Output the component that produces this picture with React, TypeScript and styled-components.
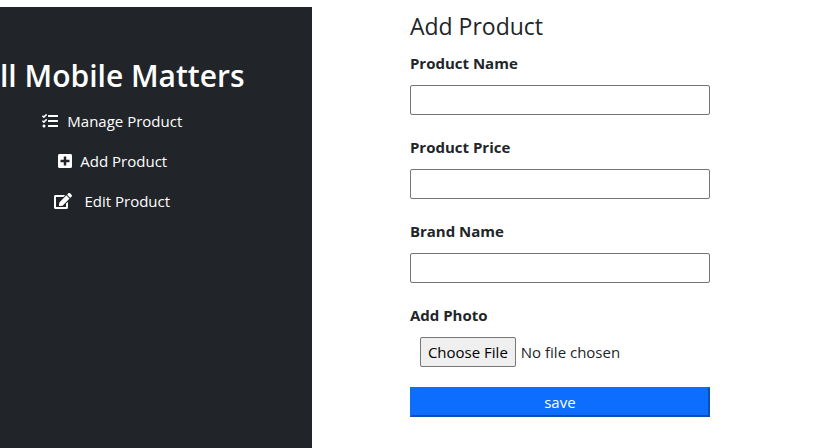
import React, { useId } from "react";
import styled, { createGlobalStyle } from "styled-components";
import { FaEdit, FaPlusSquare, FaTasks } from "react-icons/fa";

const GlobalStyle = createGlobalStyle`
  *, *::before, *::after { box-sizing: border-box; }
  body {
    margin: 0;
    background: #fff;
    color: #212529;
    font-family: "Open Sans", "Noto Sans", sans-serif;
    font-size: 15px;
    line-height: 24px;
  }
`;

const Page = styled.div`
  display: grid;
  grid-template-columns: 37.9% 1fr;
  min-height: 100vh;
  padding-top: 7px;
`;

const Sidebar = styled.aside`
  background: #212529;
  color: #fff;
  padding-top: 50px;
  overflow: hidden;
`;

const Brand = styled.h1`
  margin: 0 0 14px;
  font-size: 30px;
  font-weight: 600;
  line-height: 38px;
  white-space: nowrap;
`;

const Menu = styled.nav`
  display: flex;
  flex-direction: column;
  align-items: center;
  gap: 16px;
  width: 72%;
`;

const MenuLink = styled.a<{ $gap: number; $icon?: number }>`
  display: flex;
  align-items: center;
  gap: ${({ $gap }) => $gap}px;
  color: #fff;
  text-decoration: none;
  white-space: nowrap;

  svg { font-size: ${({ $icon = 16 }) => $icon}px; }
`;

const Main = styled.main`
  padding: 5px 16px 24px 98px;
`;

const Title = styled.h2`
  margin: 0 0 10px;
  font-size: 23px;
  font-weight: 400;
  line-height: 29px;
`;

const Form = styled.form`
  display: flex;
  flex-direction: column;
  gap: 20px;
  max-width: 300px;
`;

const Group = styled.div`
  display: flex;
  flex-direction: column;
  gap: 10px;
`;

const Label = styled.label`
  font-weight: 700;
`;

const TextInput = styled.input`
  width: 100%;
  height: 30px;
  padding: 1px 6px;
  border: 1px solid #767676;
  border-radius: 2px;
  background: #fff;
  font: inherit;
`;

const FileInput = styled.input`
  height: 30px;
  margin-left: 10px;
  color: #212529;
  font: inherit;
  line-height: 24px;

  &::file-selector-button {
    height: 30px;
    margin: 0 5px 0 0;
    padding: 1px 7px;
    border: 1px solid #767676;
    border-radius: 2px;
    background: #efefef;
    color: #000;
    font: inherit;
  }
`;

const SaveButton = styled.button`
  height: 30px;
  padding: 0;
  border: 2px solid;
  border-color: #0d6efd #0a4fb5 #0a4fb5 #0d6efd;
  background: #0d6efd;
  color: #fff;
  font: inherit;
`;

function TextField({ label, name }: { label: string; name: string }) {
  const id = useId();
  return (
    <Group>
      <Label htmlFor={id}>{label}</Label>
      <TextInput id={id} name={name} type="text" />
    </Group>
  );
}

export default function App() {
  return (
    <>
      <GlobalStyle />
      <Page>
        <Sidebar>
          <Brand>ll Mobile Matters</Brand>
          <Menu>
            <MenuLink href="#manage" $gap={9}><FaTasks />Manage Product</MenuLink>
            <MenuLink href="#add" $gap={7}><FaPlusSquare />Add Product</MenuLink>
            <MenuLink href="#edit" $gap={12} $icon={18}><FaEdit />Edit Product</MenuLink>
          </Menu>
        </Sidebar>
        <Main>
          <Title>Add Product</Title>
          <Form>
            <TextField label="Product Name" name="name" />
            <TextField label="Product Price" name="price" />
            <TextField label="Brand Name" name="brand" />
            <Group>
              <Label htmlFor="photo">Add Photo</Label>
              <FileInput id="photo" name="photo" type="file" />
            </Group>
            <SaveButton type="button">save</SaveButton>
          </Form>
        </Main>
      </Page>
    </>
  );
}
